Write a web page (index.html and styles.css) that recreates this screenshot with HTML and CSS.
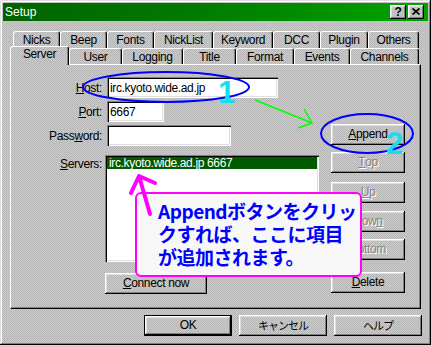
FILE: index.html
```html
<!DOCTYPE html>
<html lang="ja">
<head>
<meta charset="utf-8">
<title>Setup</title>
<link rel="stylesheet" href="styles.css">
</head>
<body>
<div class="window">
  <div class="titlebar">
    <span class="title">Setup</span>
    <div class="tb-buttons">
      <span class="tb-btn help">?</span>
      <span class="tb-btn close"><svg width="8" height="7" viewBox="0 0 8 7"><path d="M0.5 0.5 L7.5 6.5 M7.5 0.5 L0.5 6.5" stroke="#000" stroke-width="1.7" fill="none"/></svg></span>
    </div>
  </div>
  <div class="main">
    <div class="tabs">
      <div class="tabrow back">
        <div class="tab t-nicks">Nicks</div>
        <div class="tab t-beep">Beep</div>
        <div class="tab t-fonts">Fonts</div>
        <div class="tab t-nicklist">NickList</div>
        <div class="tab t-keyword">Keyword</div>
        <div class="tab t-dcc">DCC</div>
        <div class="tab t-plugin">Plugin</div>
        <div class="tab t-others">Others</div>
      </div>
      <div class="tabrow front">
        <div class="tab active t-server">Server</div>
        <div class="tab t-user">User</div>
        <div class="tab t-logging">Logging</div>
        <div class="tab t-title">Title</div>
        <div class="tab t-format">Format</div>
        <div class="tab t-events">Events</div>
        <div class="tab t-channels">Channels</div>
      </div>
    </div>
    <div class="panel">
      <div class="form">
        <div class="row"><span class="lbl"><u>H</u>ost:</span><div class="edit host">irc.kyoto.wide.ad.jp</div></div>
        <div class="row"><span class="lbl"><u>P</u>ort:</span><div class="edit port">6667</div></div>
        <div class="row"><span class="lbl">Pass<u>w</u>ord:</span><div class="edit pass"></div></div>
        <div class="row servers-row"><span class="lbl"><u>S</u>ervers:</span><div class="list"><div class="item sel">irc.kyoto.wide.ad.jp 6667</div></div></div>
        <div class="row connect-row"><div class="btn connect"><u>C</u>onnect now</div></div>
      </div>
      <div class="side">
        <div class="btn b-append"><u>A</u>ppend</div>
        <div class="btn disabled b-top"><u>T</u>op</div>
        <div class="btn disabled b-up"><u>U</u>p</div>
        <div class="btn disabled b-down">Dow<u>n</u></div>
        <div class="btn disabled b-bottom">Bottom</div>
        <div class="btn b-delete"><u>D</u>elete</div>
      </div>
    </div>
    <div class="dlg-buttons">
      <div class="btn dlg default">OK</div>
      <div class="btn dlg jp">キャンセル</div>
      <div class="btn dlg jp">ヘルプ</div>
    </div>
  </div>

  <div class="callout">Appendボタンをクリッ<br>クすれば、ここに項目<br>が追加されます。</div>
  <svg class="annot" width="431" height="345" viewBox="0 0 431 345">
    <ellipse cx="166" cy="87" rx="83" ry="15" fill="none" stroke="#0000ff" stroke-width="2"/>
    <ellipse cx="367" cy="133.5" rx="46" ry="19.5" fill="none" stroke="#0000ff" stroke-width="2"/>
    <path d="M255 100 L312 123 M304 109 L312 123 L298 128" fill="none" stroke="#00ff00" stroke-width="1.5"/>
    <path d="M150 214 L139 176 M131 193 L139 176 L155 183" fill="none" stroke="#ff00ff" stroke-width="4" stroke-linecap="round" stroke-linejoin="round"/>
  </svg>
  <span class="num n1">1</span>
  <span class="num n2">2</span>
</div>
</body>
</html>
```
FILE: styles.css
```css
* { box-sizing: border-box; }
html, body { margin: 0; padding: 0; }
body {
  width: 431px;
  height: 345px;
  overflow: hidden;
  font-family: "Liberation Sans", "Noto Sans CJK JP", sans-serif;
  font-size: 12px;
  letter-spacing: -0.35px;
  color: #000;
}
u { text-decoration: underline; text-underline-offset: 1px; }

.window {
  position: relative;
  width: 431px;
  height: 345px;
  padding: 3px;
  background: repeating-conic-gradient(#cbcbcb 0 25%, #b7b7b7 0 50%) 0 0 / 2px 2px fixed;
  box-shadow: inset -1px -1px #000, inset 1px 1px #dfdfdf, inset -2px -2px #808080, inset 2px 2px #fff;
}

/* title bar */
.titlebar {
  height: 18px;
  display: flex;
  align-items: center;
  justify-content: space-between;
  padding: 0 4px 0 2px;
  background: linear-gradient(90deg, #006400 0%, #007a00 45%, #00a400 100%);
}
.title { color: #fff; font-size: 12px; letter-spacing: 0; }
.tb-buttons { display: flex; gap: 2px; }
.tb-btn {
  width: 16px;
  height: 14px;
  display: flex;
  align-items: center;
  justify-content: center;
  background: #c0c0c0;
  box-shadow: inset -1px -1px #000, inset 1px 1px #fff, inset -2px -2px #808080, inset 2px 2px #dfdfdf;
  font-weight: bold;
  font-size: 12px;
  line-height: 12px;
  padding-bottom: 1px;
}

.main { margin: 10px 7px 0; }

/* tabs */
.tabs { height: 33px; }
.tabrow { display: flex; }
.tabrow.back { margin-left: 3px; height: 17px; }
.tabrow.front { height: 16px; }
.tab {
  display: flex;
  align-items: center;
  justify-content: center;
  border: 1px solid #fff;
  border-bottom: 0;
  border-right-color: #000;
  border-radius: 3px 3px 0 0;
  box-shadow: inset -1px 0 #808080;
  padding-bottom: 1px;
}
.back .tab { height: 17px; }
.front .tab { height: 16px; padding-top: 1px; }
.front .tab.active {
  position: relative;
  z-index: 2;
  height: 19px;
  margin-top: -2px;
  padding-top: 0;
  padding-bottom: 4px;
  background: repeating-conic-gradient(#cbcbcb 0 25%, #b7b7b7 0 50%) 0 0 / 2px 2px fixed;
}
.t-nicks { width: 47px; }
.t-beep { width: 47px; }
.t-fonts { width: 47px; }
.t-nicklist { width: 59px; }
.t-keyword { width: 60px; }
.t-dcc { width: 47px; }
.t-plugin { width: 48px; }
.t-others { width: 51px; }
.t-server { width: 59px; }
.t-user { width: 53px; }
.t-logging { width: 61px; }
.t-title { width: 53px; }
.t-format { width: 58px; }
.t-events { width: 56px; }
.t-channels { width: 69px; }

/* panel */
.panel {
  display: flex;
  height: 245px;
  border: 1px solid;
  border-color: #fff #000 #000 #fff;
  box-shadow: inset -1px -1px #808080;
}
.form { width: 310px; padding-top: 12px; display: flex; flex-direction: column; }
.row { display: flex; align-items: center; }
.row + .row { margin-top: 3px; }
.lbl { width: 91px; text-align: right; flex: none; }

.edit {
  height: 21px;
  margin-left: 5px;
  padding: 1px 3px 0 3px;
  display: flex;
  align-items: center;
  background: #fff;
  box-shadow: inset 1px 1px #808080, inset 2px 2px #000, inset -1px -1px #fff, inset -2px -2px #dfdfdf;
}
.host { width: 171px; }
.port { width: 57px; }
.pass { width: 124px; }

.row.servers-row { align-items: flex-start; margin-top: 9px; }
.servers-row .lbl { padding-top: 2px; }
.list {
  width: 214px;
  height: 107px;
  margin-left: 3px;
  padding: 2px;
  background: #fff;
  box-shadow: inset 1px 1px #808080, inset 2px 2px #000, inset -1px -1px #fff, inset -2px -2px #dfdfdf;
}
.item { height: 12px; line-height: 12px; padding-left: 2px; }
.item.sel { background: #005a00; color: #fff; }

.row.connect-row { margin-top: 11px; }

.btn {
  height: 21px;
  display: flex;
  align-items: center;
  justify-content: center;
  box-shadow: inset -1px -1px #000, inset 1px 1px #fff, inset -2px -2px #808080, inset 2px 2px #dfdfdf;
  padding-bottom: 1px;
}
.btn.disabled { color: #848484; text-shadow: 1px 1px 0 #fff; }
.connect { width: 102px; margin-left: 94px; }

.side { width: 74px; margin-left: 10px; display: flex; flex-direction: column; }
.b-append { margin-top: 59px; }
.b-top { margin-top: 7px; }
.b-up { margin-top: 9px; }
.b-down { margin-top: 8px; }
.b-bottom { margin-top: 7px; }
.b-delete { margin-top: 12px; }

/* dialog buttons */
.dlg-buttons { display: flex; justify-content: flex-end; gap: 7px; margin-top: 6px; margin-right: -1px; }
.btn.dlg { width: 88px; }
.btn.default { border: 1px solid #000; }
.btn.jp { font-family: "Noto Sans CJK JP", sans-serif; font-size: 11px; letter-spacing: -1px; }

/* annotations */
.callout {
  position: absolute;
  left: 135px;
  top: 192px;
  width: 227px;
  height: 85px;
  border: 2px solid #ff00ff;
  border-radius: 6px;
  background: #f8f8f8;
  padding: 5px 0 0 21px;
  font-family: "Noto Sans CJK JP", sans-serif;
  font-weight: 700;
  font-size: 19px;
  line-height: 23px;
  letter-spacing: -0.5px;
  color: #0000ff;
  white-space: nowrap;
  overflow: hidden;
}
.annot { position: absolute; left: 0; top: 0; pointer-events: none; }
.num {
  position: absolute;
  font-family: "Liberation Sans", sans-serif;
  font-weight: bold;
  font-size: 31px;
  line-height: 31px;
  letter-spacing: 0;
  color: #10e0f0;
}
.n1 { left: 218px; top: 77px; }
.n2 { left: 386px; top: 128px; }
```
